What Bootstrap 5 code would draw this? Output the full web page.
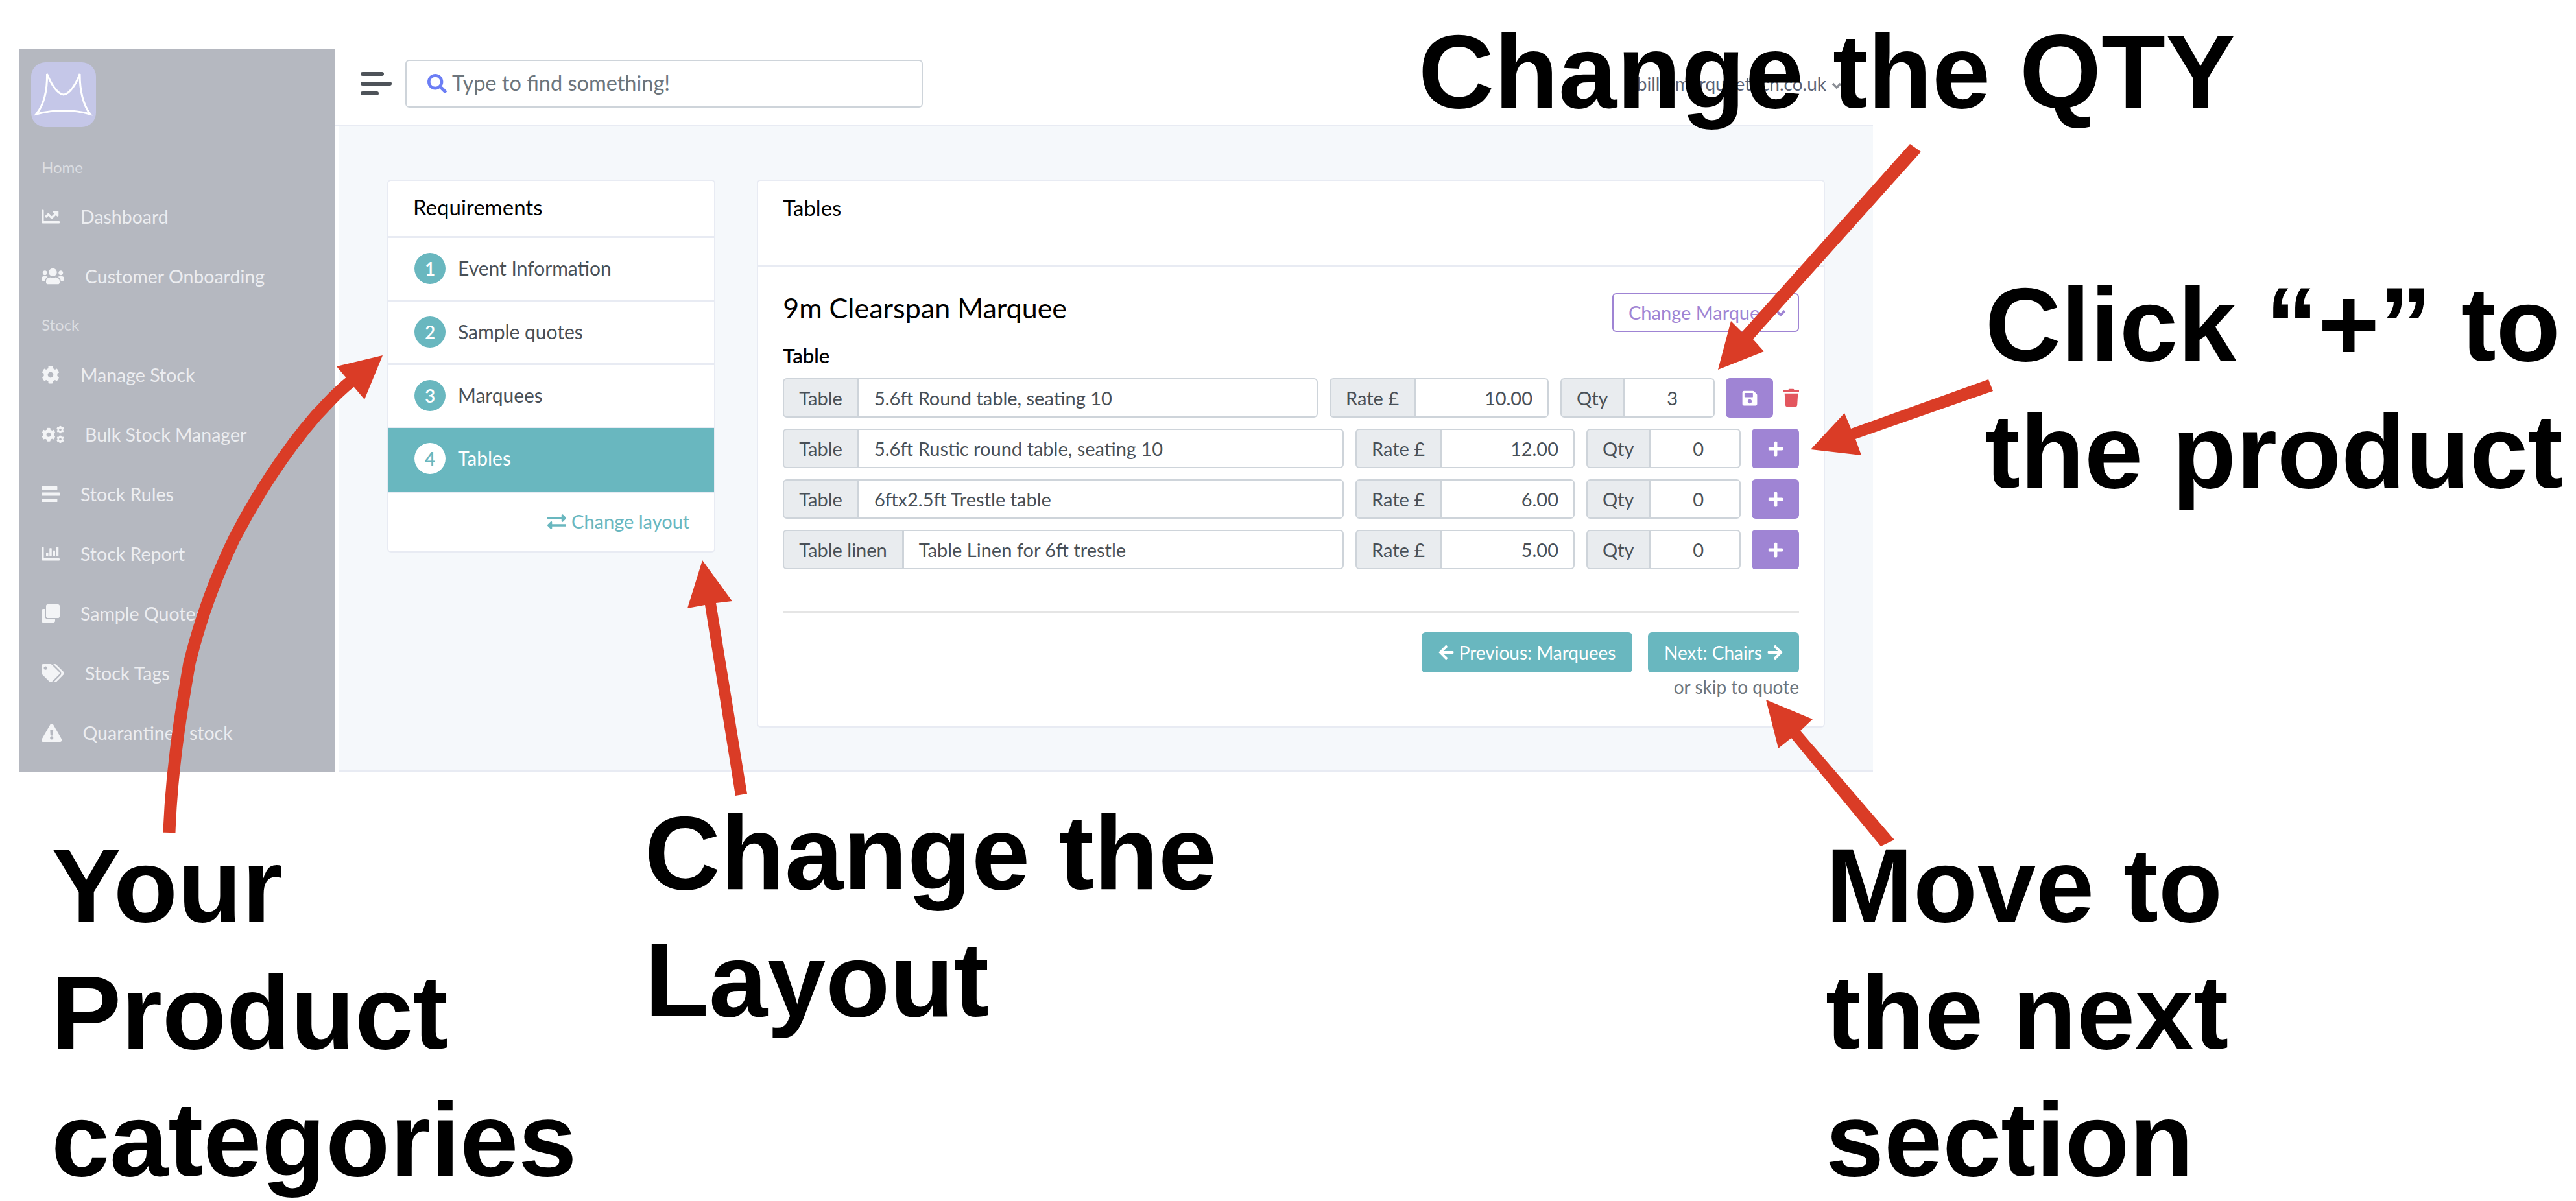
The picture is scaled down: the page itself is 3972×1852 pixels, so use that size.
<!DOCTYPE html>
<html lang="en">
<head>
    <meta charset="UTF-8">
    <meta name="viewport" content="width=device-width, initial-scale=1.0">
    <title>Quote builder - Tables</title>
    <link href="https://cdn.jsdelivr.net/npm/bootstrap@5.3.3/dist/css/bootstrap.min.css" rel="stylesheet">
    <style>
        body {
            background-color: #fff;
            color: #495057;
            font-family: "Lato", "Liberation Sans", sans-serif;
            font-size: 29px;
            height: 1852px;
            overflow: hidden;
            position: relative;
        }
        .app-shot {
            display: flex;
            width: 2858px;
            height: 1115px;
            margin: 75px 0 0 30px;
        }
        /* sidebar */
        .side-bar {
            flex: 0 0 486px;
            background-color: #b5b8c0;
            padding: 21px 18px 0 34px;
            color: #ecedf0;
            font-size: 28.5px;
        }
        .side-logo {
            display: block;
            width: 100px;
            height: 100px;
            margin: 0 0 44px -16px;
            background-color: #c5c7e8;
            border-radius: 22px;
        }
        .side-title {
            color: #dcdee2;
            font-size: 24px;
            height: 36px;
            line-height: 36px;
            margin: 11px 0 13px;
        }
        .side-logo + .side-title { margin-top: 0; margin-bottom: 12px; }
        .side-link {
            display: flex;
            align-items: center;
            gap: 32px;
            height: 92px;
            color: #ecedf0;
            text-decoration: none;
        }
        .side-link svg { fill: #f3f4f6; height: 28px; flex: none; }
        /* top bar */
        .main-area { flex: 1; min-width: 0; display: flex; flex-direction: column; }
        .top-bar {
            flex: 0 0 120px;
            border-bottom: 3px solid #e8ebf3;
            padding: 0 48px 10px 40px;
            display: flex;
            align-items: center;
        }
        .menu-bars { display: flex; flex-direction: column; gap: 9px; width: 48px; margin-right: 21px; }
        .menu-bars i { display: block; height: 6px; background: #4e5359; border-radius: 3px; }
        .menu-bars i:nth-child(1) { width: 36px; }
        .menu-bars i:nth-child(3) { width: 28px; }
        .search-box {
            width: 798px;
            height: 74px;
            border: 2px solid #ced4da;
            border-radius: 6px;
            color: #6c757d;
            padding-left: 32px;
            gap: 8px;
            font-size: 32.5px;
        }
        .search-box svg { width: 30px; height: 30px; fill: #6c7ef5; }
        .user-name { color: #5a6275; font-size: 28px; margin-left: auto; }
        .user-name svg { width: 16px; height: 16px; margin-left: 8px; stroke: #8b8f96; fill: none; stroke-width: 3.5; }
        /* page body */
        .page-body {
            flex: 1;
            margin-left: 6px;
            background-color: #f5f8fb;
            border-bottom: 3px solid #e8ebf3;
            padding: 82px 74px 0 75px;
        }
        .page-row { --bs-gutter-x: 64px; }
        .flat-card { border: 2px solid #e8ebf3; border-radius: 6px; background: #fff; }
        .flat-card .card-header { background: #fff; border-bottom: 3px solid #e8ebf3; color: #000; padding: 0 38px; font-size: 33px; }
        .req-head { height: 88px; display: flex; align-items: center; padding-bottom: 3px !important; }
        .tab-head { height: 133px; padding-top: 17px !important; }
        .flat-card .list-group-flush > .req-item {
            height: 98px;
            padding: 0 40px 2px;
            display: flex;
            align-items: center;
            gap: 19px;
            border-color: #e8ebf3;
            border-style: solid;
            border-width: 0 0 3px;
            color: #495057;
            font-size: 30px;
        }
        .flat-card .list-group-flush > .req-item.active { background-color: #69b7bf; border-color: #69b7bf; color: #fff; }
        .step-num {
            width: 48px;
            height: 48px;
            flex: none;
            background-color: #69b7bf;
            color: #fff;
            font-size: 28px;
            font-weight: 600;
        }
        .req-item.active .step-num { background-color: #fff; color: #69b7bf; }
        .layout-link {
            height: 90px;
            padding: 0 38px 2px;
            color: #69b7bf;
            text-decoration: none;
            gap: 8px;
            font-size: 29px;
        }
        .layout-link svg { width: 29px; height: 29px; fill: #69b7bf; }
        .tab-body { padding: 40px 38px 0; height: 708px; }
        .tab-title { font-size: 43px; line-height: 44px; color: #000; margin: 0 0 14px; font-weight: 400; }
        .outline-purple {
            width: 288px;
            height: 60px;
            border: 2px solid #9f84d4;
            border-radius: 6px;
            color: #9f84d4;
            font-size: 29px;
            padding: 0 0 0 23px;
            background: #fff;
        }
        .outline-purple svg { width: 17px; height: 17px; margin-left: 8px; stroke: #9f84d4; fill: none; stroke-width: 3.5; }
        .group-label { color: #000; font-weight: 600; font-size: 31px; margin: 18px 0 17px; line-height: 36px; }
        .line-row { display: flex; gap: 18px; height: 61px; margin-bottom: 17px; align-items: stretch; }
        .line-row .input-group { flex-wrap: nowrap; height: 61px; }
        .name-group { flex: 1; min-width: 0; }
        .rate-group { flex: 0 0 338px; width: 338px; }
        .qty-group { flex: 0 0 238px; width: 238px; }
        .line-row .input-group-text,
        .line-row .form-control {
            font-size: 29px;
            color: #495057;
            border: 2px solid #ced4da;
            border-radius: 6px;
            padding: 0 23px;
            display: flex;
            align-items: center;
        }
        .line-row .input-group-text { background-color: #e9ecef; }
        .line-row .form-control.num { justify-content: flex-end; }
        .rate-group .form-control.num { padding-right: 23px; }
        .qty-group .form-control.num { padding-right: 55px; }
        .purple-btn {
            background-color: #9f84d4;
            border: 0;
            border-radius: 6px;
            flex: 0 0 73px;
            width: 73px;
            padding: 0;
            margin-left: -1px;
        }
        .purple-btn svg { height: 26px; width: 26px; fill: #fff; }
        .trash-icon { width: 24px; height: 29px; fill: #e3565e; align-self: center; margin-left: -2px; }
        .foot-line { border: 0; border-top: 3px solid #e5e5e5; opacity: 1; margin: 64px 0 30px; }
        .teal-btn {
            background-color: #69b7bf;
            color: #fff;
            border: 0;
            border-radius: 6px;
            height: 62px;
            font-size: 28px;
            padding: 0;
        }
        .teal-btn svg { width: 24px; height: 26px; fill: #fff; }
        .prev-btn { width: 325px; }
        .next-btn { width: 233px; }
        .skip-link { color: #6c757d; font-size: 28px; margin-top: 6px; line-height: 32px; }
        /* annotations on top of the screenshot */
        .arrow-layer { position: absolute; left: 0; top: 0; width: 3972px; height: 1852px; pointer-events: none; }
        .callout {
            position: absolute;
            font-family: "Liberation Sans", Arial, sans-serif;
            font-weight: 700;
            font-size: 162px;
            line-height: 196px;
            color: #000;
            white-space: nowrap;
            margin: 0;
        }
        .c-qty { left: 2187px; top: 12px; }
        .c-plus { left: 3061px; top: 402px; }
        .c-cats { left: 79px; top: 1267px; }
        .c-layout { left: 994px; top: 1217px; }
        .c-move { left: 2815px; top: 1267px; }
    </style>
</head>
<body>
    <svg class="d-none">
        <symbol id="ico-cog" viewBox="0 0 512 512"><path d="M487.4 315.7l-42.6-24.6c4.3-23.2 4.3-47 0-70.2l42.6-24.6c4.9-2.8 7.1-8.6 5.5-14-11.1-35.6-30-67.8-54.7-94.6-3.8-4.1-10-5.1-14.8-2.3L380.8 110c-17.9-15.4-38.5-27.3-60.8-35.1V25.8c0-5.6-3.9-10.5-9.4-11.7-36.7-8.2-74.3-7.8-109.2 0-5.5 1.2-9.4 6.1-9.4 11.7V75c-22.2 7.9-42.8 19.8-60.8 35.1L88.7 85.5c-4.9-2.8-11-1.9-14.8 2.3-24.7 26.7-43.6 58.9-54.7 94.6-1.7 5.4.6 11.2 5.5 14L67.3 221c-4.3 23.2-4.3 47 0 70.2l-42.6 24.6c-4.9 2.8-7.1 8.6-5.5 14 11.1 35.6 30 67.8 54.7 94.6 3.8 4.1 10 5.1 14.8 2.3l42.6-24.6c17.9 15.4 38.5 27.3 60.8 35.1v49.2c0 5.6 3.9 10.5 9.4 11.7 36.7 8.2 74.3 7.8 109.2 0 5.5-1.2 9.4-6.1 9.4-11.7v-49.2c22.2-7.9 42.8-19.8 60.8-35.1l42.6 24.6c4.9 2.8 11 1.9 14.8-2.3 24.7-26.7 43.6-58.9 54.7-94.6 1.5-5.5-.7-11.3-5.6-14.1zM256 336c-44.1 0-80-35.9-80-80s35.9-80 80-80 80 35.9 80 80-35.9 80-80 80z"/></symbol>
        <symbol id="ico-plus" viewBox="0 0 448 512"><path d="M416 208H272V64c0-17.67-14.33-32-32-32h-32c-17.67 0-32 14.33-32 32v144H32c-17.67 0-32 14.33-32 32v32c0 17.67 14.33 32 32 32h144v144c0 17.67 14.33 32 32 32h32c17.67 0 32-14.33 32-32V304h144c17.67 0 32-14.33 32-32v-32c0-17.67-14.33-32-32-32z"/></symbol>
    </svg>

    <div class="app-shot">
        <!-- Menu lateral -->
        <nav class="side-bar">
            <svg class="side-logo" viewBox="0 0 100 100"><path d="M24.5 18C30 32 40 49 50 50C60 49 70 32 75 18C75 45 80 65 91 80C65 73 35 73 8 80C20 65 25 45 24.5 18Z" fill="none" stroke="#fff" stroke-width="3"/></svg>
            <div class="side-title">Home</div>
            <a class="side-link" href="#"><svg viewBox="0 0 512 512"><path d="M496 384H64V80c0-8.84-7.16-16-16-16H16C7.16 64 0 71.16 0 80v336c0 17.67 14.33 32 32 32h464c8.84 0 16-7.16 16-16v-32c0-8.84-7.16-16-16-16zM464 96H345.94c-21.38 0-32.09 25.85-16.97 40.97l32.4 32.4L288 242.75l-73.37-73.37c-12.5-12.5-32.76-12.5-45.25 0l-68.69 68.69c-6.25 6.25-6.25 16.38 0 22.63l22.62 22.62c6.25 6.25 16.38 6.25 22.63 0L192 237.25l73.37 73.37c12.5 12.5 32.76 12.5 45.25 0l96-96 32.4 32.4c15.12 15.12 40.97 4.41 40.97-16.97V112c.01-8.84-7.15-16-15.99-16z"/></svg>Dashboard</a>
            <a class="side-link" href="#"><svg viewBox="0 0 640 512"><path d="M96 224c35.3 0 64-28.7 64-64s-28.7-64-64-64-64 28.7-64 64 28.7 64 64 64zm448 0c35.3 0 64-28.7 64-64s-28.7-64-64-64-64 28.7-64 64 28.7 64 64 64zm32 32h-64c-17.6 0-33.5 7.1-45.1 18.6 40.3 22.1 68.9 62 75.1 109.4h66c17.7 0 32-14.3 32-32v-32c0-35.3-28.7-64-64-64zm-256 0c61.9 0 112-50.1 112-112S381.9 32 320 32 208 82.1 208 144s50.1 112 112 112zm76.8 32h-8.3c-20.8 10-43.9 16-68.5 16s-47.6-6-68.5-16h-8.3C179.6 288 128 339.6 128 403.2V432c0 26.5 21.5 48 48 48h288c26.5 0 48-21.5 48-48v-28.8c0-63.6-51.6-115.2-115.2-115.2zm-223.7-13.4C161.5 263.1 145.6 256 128 256H64c-35.3 0-64 28.7-64 64v32c0 17.7 14.3 32 32 32h65.9c6.3-47.4 34.9-87.3 75.2-109.4z"/></svg>Customer Onboarding</a>
            <div class="side-title">Stock</div>
            <a class="side-link" href="#"><svg viewBox="0 0 512 512"><use href="#ico-cog"/></svg>Manage Stock</a>
            <a class="side-link" href="#"><svg viewBox="0 0 640 512"><use href="#ico-cog" x="0" y="60" width="400" height="400"/><use href="#ico-cog" x="420" y="10" width="220" height="220"/><use href="#ico-cog" x="420" y="280" width="220" height="220"/></svg>Bulk Stock Manager</a>
            <a class="side-link" href="#"><svg viewBox="0 0 448 448"><rect y="32" width="390" height="80" rx="10"/><rect y="184" width="448" height="80" rx="10"/><rect y="336" width="390" height="80" rx="10"/></svg>Stock Rules</a>
            <a class="side-link" href="#"><svg viewBox="0 0 512 512"><path d="M332.8 320h38.4c6.4 0 12.8-6.4 12.8-12.8V172.8c0-6.4-6.4-12.8-12.8-12.8h-38.4c-6.4 0-12.8 6.4-12.8 12.8v134.4c0 6.4 6.4 12.8 12.8 12.8zm96 0h38.4c6.4 0 12.8-6.4 12.8-12.8V76.8c0-6.4-6.4-12.8-12.8-12.8h-38.4c-6.4 0-12.8 6.4-12.8 12.8v230.4c0 6.4 6.4 12.8 12.8 12.8zm-288 0h38.4c6.4 0 12.8-6.4 12.8-12.8v-70.4c0-6.4-6.4-12.8-12.8-12.8h-38.4c-6.4 0-12.8 6.4-12.8 12.8v70.4c0 6.4 6.4 12.8 12.8 12.8zm96 0h38.4c6.4 0 12.8-6.4 12.8-12.8V108.8c0-6.4-6.4-12.8-12.8-12.8h-38.4c-6.4 0-12.8 6.4-12.8 12.8v198.4c0 6.4 6.4 12.8 12.8 12.8zM496 384H64V80c0-8.84-7.16-16-16-16H16C7.16 64 0 71.16 0 80v336c0 17.67 14.33 32 32 32h464c8.84 0 16-7.16 16-16v-32c0-8.84-7.16-16-16-16z"/></svg>Stock Report</a>
            <a class="side-link" href="#"><svg viewBox="0 0 512 512"><path d="M464 0c26.51 0 48 21.49 48 48v288c0 26.51-21.49 48-48 48H176c-26.51 0-48-21.49-48-48V48c0-26.51 21.49-48 48-48h288M176 416c-44.112 0-80-35.888-80-80V128H48c-26.51 0-48 21.49-48 48v288c0 26.51 21.49 48 48 48h288c26.51 0 48-21.49 48-48v-48H176z"/></svg>Sample Quotes</a>
            <a class="side-link" href="#"><svg viewBox="0 0 640 512"><path d="M497.941 225.941L286.059 14.059A48 48 0 0 0 252.118 0H48C21.49 0 0 21.49 0 48v204.118a48 48 0 0 0 14.059 33.941l211.882 211.882c18.744 18.745 49.136 18.746 67.882 0l204.118-204.118c18.745-18.745 18.745-49.137 0-67.882zM112 160c-26.51 0-48-21.49-48-48s21.49-48 48-48 48 21.49 48 48-21.49 48-48 48zm513.941 133.823L421.823 497.941c-18.745 18.745-49.137 18.745-67.882 0l-.36-.36L527.64 323.522c16.999-16.999 26.36-39.6 26.36-63.64s-9.362-46.641-26.36-63.64L331.397 0h48.721a48 48 0 0 1 33.941 14.059l211.882 211.882c18.745 18.745 18.745 49.137 0 67.882z"/></svg>Stock Tags</a>
            <a class="side-link" href="#"><svg viewBox="0 0 576 512"><path d="M569.517 440.013C587.975 472.007 564.806 512 527.94 512H48.054c-36.937 0-59.999-40.055-41.577-71.987L246.423 24.035c18.467-32.009 64.72-31.951 83.154 0l239.94 415.978zM288 354c-25.405 0-46 20.595-46 46s20.595 46 46 46 46-20.595 46-46-20.595-46-46-46zm-43.673-165.346l7.418 136c.347 6.364 5.609 11.346 11.982 11.346h48.546c6.373 0 11.635-4.982 11.982-11.346l7.418-136c.375-6.874-5.098-12.654-11.982-12.654h-63.383c-6.884 0-12.356 5.78-11.981 12.654z"/></svg>Quarantined stock</a>
        </nav>

        <div class="main-area">
            <!-- Barra superior -->
            <header class="top-bar">
                <div class="menu-bars"><i></i><i></i><i></i></div>
                <div class="search-box d-flex align-items-center">
                    <svg viewBox="0 0 512 512"><path d="M505 442.7L405.3 343c-4.5-4.5-10.6-7-17-7H372c27.6-35.3 44-79.7 44-128C416 93.1 322.9 0 208 0S0 93.1 0 208s93.1 208 208 208c48.3 0 92.7-16.4 128-44v16.3c0 6.4 2.5 12.5 7 17l99.7 99.7c9.4 9.4 24.6 9.4 33.9 0l28.3-28.3c9.4-9.4 9.4-24.6.1-34zM208 336c-70.7 0-128-57.2-128-128 0-70.7 57.2-128 128-128 70.7 0 128 57.2 128 128 0 70.7-57.2 128-128 128z"/></svg>
                    <span>Type to find something!</span>
                </div>
                <div class="user-name">bill@marqueetech.co.uk<svg viewBox="0 0 16 16"><path d="M2 5l6 6 6-6"/></svg></div>
            </header>

            <main class="page-body">
                <div class="row page-row">
                    <div class="col-3">
                        <div class="card flat-card">
                            <div class="card-header req-head">Requirements</div>
                            <div class="list-group list-group-flush">
                                <a class="list-group-item req-item" href="#"><span class="step-num rounded-circle d-inline-flex align-items-center justify-content-center">1</span>Event Information</a>
                                <a class="list-group-item req-item" href="#"><span class="step-num rounded-circle d-inline-flex align-items-center justify-content-center">2</span>Sample quotes</a>
                                <a class="list-group-item req-item" href="#"><span class="step-num rounded-circle d-inline-flex align-items-center justify-content-center">3</span>Marquees</a>
                                <a class="list-group-item req-item active" href="#"><span class="step-num rounded-circle d-inline-flex align-items-center justify-content-center">4</span>Tables</a>
                            </div>
                            <a class="layout-link d-flex align-items-center justify-content-end" href="#">
                                <svg viewBox="0 0 512 512"><path d="M0 168v-16c0-13.255 10.745-24 24-24h360V80c0-21.367 25.899-32 40.971-16.971l80 80c9.372 9.373 9.372 24.569 0 33.941l-80 80C409.956 271.982 384 261.456 384 240v-48H24c-13.255 0-24-10.745-24-24zm488 152H128v-48c0-21.314-25.862-32.08-40.971-16.971l-80 80c-9.372 9.373-9.372 24.569 0 33.941l80 80C102.057 463.997 128 453.437 128 432v-48h360c13.255 0 24-10.745 24-24v-16c0-13.255-10.745-24-24-24z"/></svg>Change layout
                            </a>
                        </div>
                    </div>
                    <div class="col-9">
                        <div class="card flat-card">
                            <div class="card-header tab-head">Tables</div>
                            <div class="tab-body">
                                <div class="d-flex justify-content-between align-items-center">
                                    <h4 class="tab-title">9m Clearspan Marquee</h4>
                                    <button class="btn outline-purple d-flex align-items-center" type="button">Change Marquee<svg viewBox="0 0 16 16"><path d="M2 5l6 6 6-6"/></svg></button>
                                </div>
                                <div class="group-label">Table</div>

                                <div class="line-row">
                                    <div class="input-group name-group"><span class="input-group-text">Table</span><span class="form-control">5.6ft Round table, seating 10</span></div>
                                    <div class="input-group rate-group"><span class="input-group-text">Rate £</span><span class="form-control num">10.00</span></div>
                                    <div class="input-group qty-group"><span class="input-group-text">Qty</span><span class="form-control num">3</span></div>
                                    <button class="btn purple-btn d-flex align-items-center justify-content-center" type="button"><svg viewBox="0 0 448 512"><path d="M433.941 129.941l-83.882-83.882A48 48 0 0 0 316.118 32H48C21.49 32 0 53.49 0 80v352c0 26.51 21.49 48 48 48h352c26.51 0 48-21.49 48-48V163.882a48 48 0 0 0-14.059-33.941zM224 416c-35.346 0-64-28.654-64-64 0-35.346 28.654-64 64-64s64 28.654 64 64c0 35.346-28.654 64-64 64zm96-304.52V212c0 6.627-5.373 12-12 12H76c-6.627 0-12-5.373-12-12V108c0-6.627 5.373-12 12-12h228.52c3.183 0 6.235 1.264 8.485 3.515l3.48 3.48A11.996 11.996 0 0 1 320 111.48z"/></svg></button>
                                    <svg class="trash-icon" viewBox="0 0 448 512"><path d="M432 32H312l-9.4-18.7A24 24 0 0 0 281.1 0H166.8a23.72 23.72 0 0 0-21.4 13.3L136 32H16A16 16 0 0 0 0 48v32a16 16 0 0 0 16 16h416a16 16 0 0 0 16-16V48a16 16 0 0 0-16-16zM53.2 467a48 48 0 0 0 47.9 45h245.8a48 48 0 0 0 47.9-45L416 128H32z"/></svg>
                                </div>
                                <div class="line-row">
                                    <div class="input-group name-group"><span class="input-group-text">Table</span><span class="form-control">5.6ft Rustic round table, seating 10</span></div>
                                    <div class="input-group rate-group"><span class="input-group-text">Rate £</span><span class="form-control num">12.00</span></div>
                                    <div class="input-group qty-group"><span class="input-group-text">Qty</span><span class="form-control num">0</span></div>
                                    <button class="btn purple-btn d-flex align-items-center justify-content-center" type="button"><svg viewBox="0 0 448 512"><use href="#ico-plus"/></svg></button>
                                </div>
                                <div class="line-row">
                                    <div class="input-group name-group"><span class="input-group-text">Table</span><span class="form-control">6ftx2.5ft Trestle table</span></div>
                                    <div class="input-group rate-group"><span class="input-group-text">Rate £</span><span class="form-control num">6.00</span></div>
                                    <div class="input-group qty-group"><span class="input-group-text">Qty</span><span class="form-control num">0</span></div>
                                    <button class="btn purple-btn d-flex align-items-center justify-content-center" type="button"><svg viewBox="0 0 448 512"><use href="#ico-plus"/></svg></button>
                                </div>
                                <div class="line-row">
                                    <div class="input-group name-group"><span class="input-group-text">Table linen</span><span class="form-control">Table Linen for 6ft trestle</span></div>
                                    <div class="input-group rate-group"><span class="input-group-text">Rate £</span><span class="form-control num">5.00</span></div>
                                    <div class="input-group qty-group"><span class="input-group-text">Qty</span><span class="form-control num">0</span></div>
                                    <button class="btn purple-btn d-flex align-items-center justify-content-center" type="button"><svg viewBox="0 0 448 512"><use href="#ico-plus"/></svg></button>
                                </div>

                                <hr class="foot-line">
                                <div class="d-flex justify-content-end gap-4">
                                    <button class="btn teal-btn prev-btn d-flex align-items-center justify-content-center gap-2" type="button"><svg viewBox="0 0 448 512"><path d="M257.5 445.1l-22.2 22.2c-9.4 9.4-24.6 9.4-33.9 0L7 273c-9.4-9.4-9.4-24.6 0-33.9L201.4 44.7c9.4-9.4 24.6-9.4 33.9 0l22.2 22.2c9.5 9.5 9.3 25-.4 34.3L136.6 216H424c13.3 0 24 10.7 24 24v32c0 13.3-10.7 24-24 24H136.6l120.5 114.8c9.8 9.3 10 24.8.4 34.3z"/></svg>Previous: Marquees</button>
                                    <button class="btn teal-btn next-btn d-flex align-items-center justify-content-center gap-2" type="button">Next: Chairs<svg viewBox="0 0 448 512"><path d="M190.5 66.9l22.2-22.2c9.4-9.4 24.6-9.4 33.9 0L441 239c9.4 9.4 9.4 24.6 0 33.9L246.6 467.3c-9.4 9.4-24.6 9.4-33.9 0l-22.2-22.2c-9.5-9.5-9.3-25 .4-34.3L311.4 296H24c-13.3 0-24-10.7-24-24v-32c0-13.3 10.7-24 24-24h287.4L190.9 101.2c-9.8-9.3-10-24.8-.4-34.3z"/></svg></button>
                                </div>
                                <div class="skip-link text-end">or skip to quote</div>
                            </div>
                        </div>
                    </div>
                </div>
            </main>
        </div>
    </div>

    <!-- Setas vermelhas e legendas por cima da captura -->
    <svg class="arrow-layer" viewBox="0 0 3972 1852" fill="#da3c26">
        <path d="M261 1284C264 1200 275 1120 292 1023C310 950 335 885 361 831C395 765 440 695 488 640C510 617 522 603 545 585" fill="none" stroke="#da3c26" stroke-width="19"/>
        <polygon points="590,548 519,565 562,616"/>
        <polygon points="1083,864 1060,938 1087,933 1134,1227 1152,1224 1104,930 1129,927"/>
        <polygon points="2649,570 2669,495 2686,512 2945,222 2962,234 2703,523 2720,542"/>
        <polygon points="2792,693 2844,637 2854,661 3066,585 3073,603 2861,677 2870,702"/>
        <polygon points="2723,1079 2795,1109 2776,1127 2921,1295 2900,1305 2762,1138 2742,1154"/>
    </svg>
    <p class="callout c-qty">Change the QTY</p>
    <p class="callout c-plus">Click “+” to<br>the product</p>
    <p class="callout c-cats">Your<br>Product<br>categories</p>
    <p class="callout c-layout">Change the<br>Layout</p>
    <p class="callout c-move">Move to<br>the next<br>section</p>

    <script src="https://cdn.jsdelivr.net/npm/bootstrap@5.3.3/dist/js/bootstrap.bundle.min.js"></script>
</body>
</html>
